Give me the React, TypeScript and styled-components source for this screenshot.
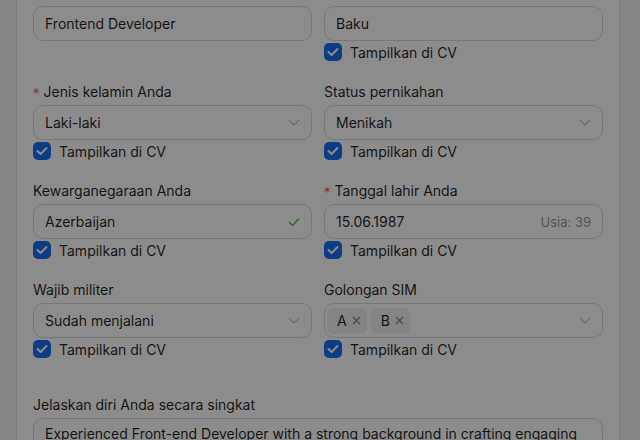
import React from "react";
import styled, { createGlobalStyle } from "styled-components";

const Global = createGlobalStyle`
  html, body {
    margin: 0;
    padding: 0;
    height: 100%;
    overflow: hidden;
    background: #f5f5f5;
  }
  * { box-sizing: border-box; }
`;

const Page = styled.div`
  padding: 0 20px 0 16px;
  font-family: Inter, "Noto Sans", sans-serif;
  font-size: 14px;
  color: rgba(0, 0, 0, 0.88);
`;

const Card = styled.div`
  width: 604px;
  background: #ffffff;
  border: 1px solid #e5e7eb;
  border-top: 0;
  padding: 6px 16px 24px;
`;

const Grid = styled.div`
  display: grid;
  grid-template-columns: 1fr 1fr;
  column-gap: 12px;
  row-gap: 18px;
  align-items: start;
`;

const Field = styled.div`
  display: flex;
  flex-direction: column;
`;

const Section = styled(Field)`
  margin-top: 34px;
`;

const Label = styled.label`
  display: block;
  height: 22px;
  line-height: 22px;
  margin-bottom: 2px;
  white-space: nowrap;
`;

const Req = styled.span`
  color: #ff4d4f;
  margin-right: 4px;
  font-family: "DejaVu Sans", sans-serif;
  font-size: 13px;
  line-height: 0;
`;

const Control = styled.div<{ $tags?: boolean }>`
  height: 35px;
  border: 1px solid #d9d9d9;
  border-radius: 10px;
  background: #fff;
  display: flex;
  align-items: center;
  gap: 4px;
  padding: ${(p) => (p.$tags ? "0 11px 0 2px" : "0 11px")};
  line-height: 22px;
`;

const Value = styled.span`
  flex: 1;
  white-space: nowrap;
`;

const Hint = styled.span`
  font-size: 13px;
  color: rgba(0, 0, 0, 0.45);
`;

const Tag = styled.span`
  height: 26px;
  display: inline-flex;
  align-items: center;
  gap: 5px;
  padding: 0 6px 0 10px;
  border-radius: 6px;
  background: rgba(0, 0, 0, 0.06);
  white-space: nowrap;
`;

const Spacer = styled.span`
  flex: 1;
`;

const CheckRow = styled.label`
  height: 22px;
  display: flex;
  align-items: center;
  gap: 8px;
  white-space: nowrap;
`;

const Box = styled.span`
  width: 18px;
  height: 18px;
  border-radius: 5px;
  background: #1670f0;
  display: inline-flex;
  align-items: center;
  justify-content: center;
`;

const TextArea = styled.textarea`
  width: 100%;
  border: 1px solid #d9d9d9;
  border-radius: 10px;
  padding: 4px 11px;
  font-family: inherit;
  font-size: 14px;
  line-height: 22px;
  color: inherit;
  resize: none;
  outline: none;
  overflow: hidden;
`;

const Overlay = styled.div`
  position: fixed;
  inset: 0;
  background: rgba(0, 0, 0, 0.45);
`;

const Chevron = () => (
  <svg width="12" height="7" viewBox="0 0 12 7" fill="none">
    <polyline points="0.8,0.8 6,6 11.2,0.8" stroke="#bfbfbf" strokeWidth="1.1" />
  </svg>
);

const Valid = () => (
  <svg width="12" height="10" viewBox="0 0 12 10" fill="none">
    <polyline points="1,5 4.5,8.5 11,1.5" stroke="#52c41a" strokeWidth="1.4" />
  </svg>
);

const Close = () => (
  <svg width="9" height="9" viewBox="0 0 9 9" fill="none">
    <path d="M1 1L8 8M8 1L1 8" stroke="rgba(0,0,0,0.45)" strokeWidth="1.1" />
  </svg>
);

const Tick = () => (
  <svg width="12" height="10" viewBox="0 0 12 10" fill="none">
    <polyline points="1.5,5 4.6,8 10.5,2" stroke="#fff" strokeWidth="2" strokeLinecap="round" strokeLinejoin="round" />
  </svg>
);

const ShowInCV = () => (
  <CheckRow>
    <Box>
      <Tick />
    </Box>
    Tampilkan di CV
  </CheckRow>
);

export default function App() {
  return (
    <>
      <Global />
      <Page>
        <Card>
          <Grid>
            <Field>
              <Control>
                <Value>Frontend Developer</Value>
              </Control>
            </Field>
            <Field>
              <Control>
                <Value>Baku</Value>
              </Control>
              <ShowInCV />
            </Field>

            <Field>
              <Label>
                <Req>*</Req>Jenis kelamin Anda
              </Label>
              <Control>
                <Value>Laki-laki</Value>
                <Chevron />
              </Control>
              <ShowInCV />
            </Field>
            <Field>
              <Label>Status pernikahan</Label>
              <Control>
                <Value>Menikah</Value>
                <Chevron />
              </Control>
              <ShowInCV />
            </Field>

            <Field>
              <Label>Kewarganegaraan Anda</Label>
              <Control>
                <Value>Azerbaijan</Value>
                <Valid />
              </Control>
              <ShowInCV />
            </Field>
            <Field>
              <Label>
                <Req>*</Req>Tanggal lahir Anda
              </Label>
              <Control>
                <Value>15.06.1987</Value>
                <Hint>Usia: 39</Hint>
              </Control>
              <ShowInCV />
            </Field>

            <Field>
              <Label>Wajib militer</Label>
              <Control>
                <Value>Sudah menjalani</Value>
                <Chevron />
              </Control>
              <ShowInCV />
            </Field>
            <Field>
              <Label>Golongan SIM</Label>
              <Control $tags>
                <Tag>
                  A<Close />
                </Tag>
                <Tag>
                  B<Close />
                </Tag>
                <Spacer />
                <Chevron />
              </Control>
              <ShowInCV />
            </Field>
          </Grid>

          <Section>
            <Label>Jelaskan diri Anda secara singkat</Label>
            <TextArea
              rows={4}
              readOnly
              defaultValue="Experienced Front-end Developer with a strong background in crafting engaging and responsive user interfaces for modern web applications."
            />
          </Section>
        </Card>
      </Page>
      <Overlay />
    </>
  );
}
